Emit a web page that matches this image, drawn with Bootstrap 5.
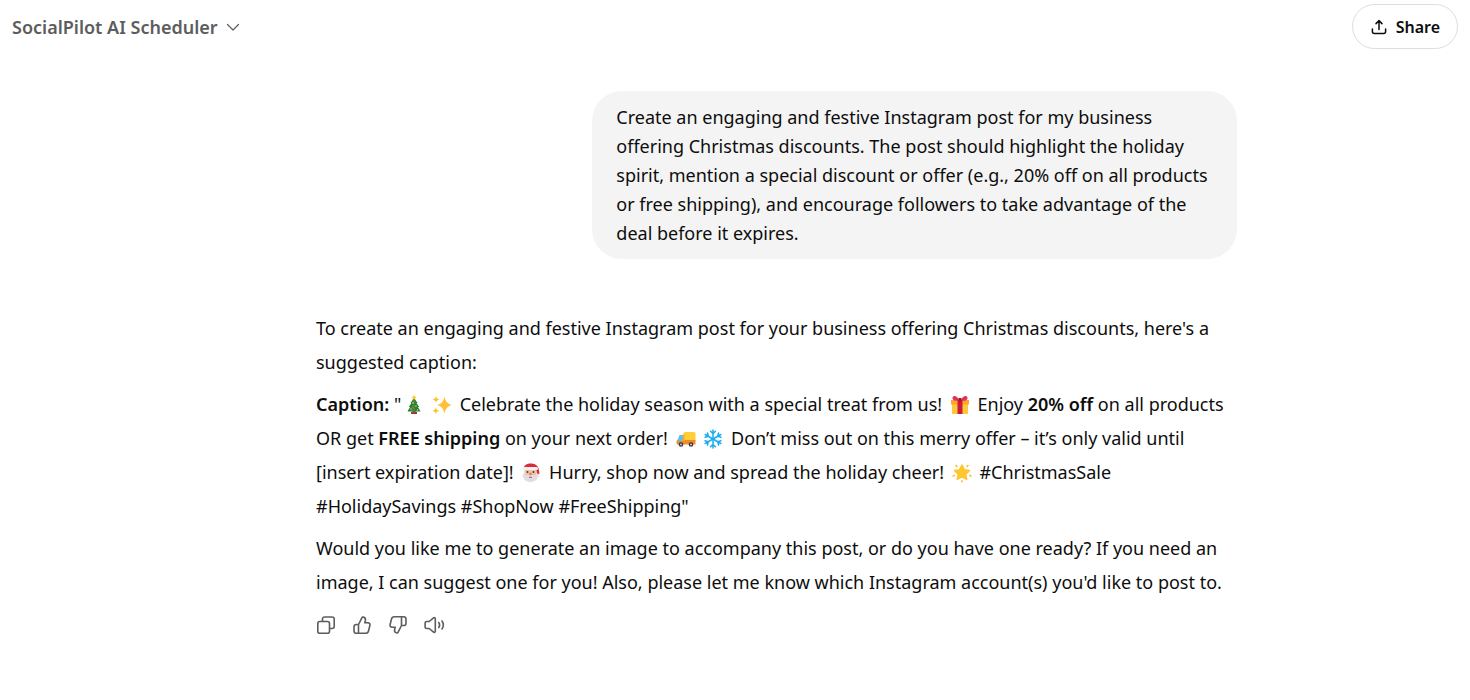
<!DOCTYPE html>
<html lang="en">
<head>
<meta charset="utf-8">
<meta name="viewport" content="width=device-width, initial-scale=1">
<title>SocialPilot AI Scheduler</title>
<link href="https://cdn.jsdelivr.net/npm/bootstrap@5.3.0/dist/css/bootstrap.min.css" rel="stylesheet">
<style>
  body { font-family: "Noto Sans", "Open Sans", sans-serif; font-size: 18px; color: #0d0d0d; background: #fff; }
  .topbar { padding: 4px 12px; }
  .model-btn { color: #5d5d5d; font-size: 18px; font-weight: 600; line-height: 28px; }
  .share-btn { height: 45px; padding: 0 17px; border: 1px solid #dedede; font-size: 16px; font-weight: 600; color: #0d0d0d; }
  .thread { max-width: 921px; }
  .thread-wrap { padding-left: 83px; }
  .bubble { max-width: 70%; margin-top: 38px; padding: 12px 24px 11px; border-radius: 30px; background: #f4f4f4; line-height: 29px; }
  .reply { margin-top: 52px; line-height: 34px; }
  .reply p { margin-bottom: 8px; }
  .reply strong { font-weight: 600; }
  .emo { width: 20px; height: 20px; margin: 0 3px; vertical-align: -4px; }
  .emo-next { margin-left: 0; }
  .tool { width: 20px; height: 20px; color: #5d5d5d; }
  .line-icon { fill: none; stroke: currentColor; stroke-linecap: round; stroke-linejoin: round; display: block; }
</style>
</head>
<body>
<header class="topbar d-flex align-items-center justify-content-between">
  <button type="button" class="model-btn btn p-0 border-0 d-flex align-items-center gap-2">SocialPilot AI Scheduler
    <svg class="line-icon" width="14" height="14" viewBox="0 0 14 14" stroke-width="1.2" aria-hidden="true"><path d="M1.500 4.500 7 10l5.500-5.500"/></svg>
  </button>
  <button type="button" class="share-btn btn rounded-pill d-flex align-items-center gap-2">
    <svg class="line-icon" width="18" height="18" viewBox="0 0 18 18" stroke-width="1.500" aria-hidden="true"><path d="M9 11.500V2.800M6 5.600 9 2.600l3 3M2.400 11v2.600c0 1.200.8 2 2 2h9.200c1.200 0 2-.8 2-2V11"/></svg>
    Share
  </button>
</header>

<main class="thread-wrap">
  <div class="thread mx-auto">
    <div class="d-flex justify-content-end">
      <div class="bubble">Create an engaging and festive Instagram post for my business offering Christmas discounts. The post should highlight the holiday spirit, mention a special discount or offer (e.g., 20% off on all products or free shipping), and encourage followers to take advantage of the deal before it expires.</div>
    </div>

    <article class="reply">
      <p>To create an engaging and festive Instagram post for your business offering Christmas discounts, here's a suggested caption:</p>
      <p><strong>Caption:</strong> "<svg class="emo" viewBox="0 0 20 20" role="img" aria-label="Christmas tree"><path fill="#8b5a3c" d="M8.500 15h3v4h-3z"/><path fill="#a33b34" d="M7 17h6v2H7z"/><path fill="#1d7f38" d="M10 3 6.500 8h1L4.800 12h1.300L3.500 16.500h13L13.900 12h1.300L12.500 8h1z"/><path fill="#38983f" d="m10 3-2 5 2 1-3 4 3 1-4 2h5z"/><path fill="#ffc830" d="m10 0 .8 1.600 1.800.3-1.300 1.200.3 1.800L10 4l-1.600.9.3-1.800-1.300-1.200 1.800-.3z"/><g fill="#ffd23c"><circle cx="9" cy="8" r=".8"/><circle cx="12" cy="11" r=".8"/><circle cx="7" cy="14" r=".8"/><circle cx="13.500" cy="15" r=".8"/></g><g fill="#e34b3b"><circle cx="11" cy="7" r=".7"/><circle cx="8.500" cy="11.500" r=".7"/><circle cx="10.500" cy="14" r=".7"/></g></svg>
      <svg class="emo emo-next" viewBox="0 0 20 20" role="img" aria-label="Sparkles"><g fill="#ffbf36"><path d="M12.500 1.500c1.200 5 2.500 7 7.500 8.500-5 1.500-6.300 3.500-7.500 8.500-1.200-5-2.500-7-7.500-8.500 5-1.500 6.300-3.500 7.500-8.500z"/><path d="M4 1c.5 2.200 1.300 2.900 3.500 3.400C5.300 4.900 4.500 5.600 4 7.800 3.500 5.600 2.700 4.900.5 4.400 2.700 3.900 3.500 3.200 4 1zM3.800 12.300c.5 2.200 1.300 2.900 3.500 3.400-2.200.5-3 1.200-3.500 3.400-.5-2.200-1.300-2.900-3.500-3.400 2.200-.5 3-1.200 3.500-3.400z"/></g></svg>
      Celebrate the holiday season with a special treat from us! <svg class="emo" viewBox="0 0 20 20" role="img" aria-label="Wrapped gift"><path fill="#ffc837" d="M2 8h16v11H2z"/><path fill="#f9a72f" d="M1 5h18v4.500H1z"/><path fill="#c91c3c" d="M7.500 5h5v14h-5z"/><path fill="#e9304a" d="M9 5C7 0 2 0 2.500 3.500 3 6 7 6 10 6s7 0 7.500-2.500C18 0 13 0 11 5z"/><path fill="#a5132f" d="M8.500 3h3v3.500h-3z"/></svg>
      Enjoy <strong>20% off</strong> on all products OR get <strong>FREE shipping</strong> on your next order! <svg class="emo" viewBox="0 0 20 20" role="img" aria-label="Delivery truck"><rect x="7.500" y="3" width="12" height="10" rx="1.500" fill="#ffcf3a"/><path fill="#f28b22" d="M1 11h18.500v4.500H1c-.7-1-.7-3 0-4.500z"/><path fill="#54c5f2" d="M3.500 6H7v6H1.200z"/><path fill="#f8a62a" d="M6.500 5.500h2V12h-2z"/><g fill="#3c3540"><circle cx="5" cy="15.500" r="2.300"/><circle cx="15" cy="15.500" r="2.300"/></g><g fill="#c9c6cc"><circle cx="5" cy="15.500" r="1"/><circle cx="15" cy="15.500" r="1"/></g></svg>
      <svg class="emo emo-next" viewBox="0 0 20 20" role="img" aria-label="Snowflake"><defs><path id="flake-arm" d="M10 10V1M7.600 2.200 10 4.600l2.400-2.400"/></defs><g fill="none" stroke="#1bacf0" stroke-width="1.500" stroke-linecap="round"><use href="#flake-arm"/><use href="#flake-arm" transform="rotate(60 10 10)"/><use href="#flake-arm" transform="rotate(120 10 10)"/><use href="#flake-arm" transform="rotate(180 10 10)"/><use href="#flake-arm" transform="rotate(240 10 10)"/><use href="#flake-arm" transform="rotate(300 10 10)"/></g></svg>
      Don’t miss out on this merry offer – it’s only valid until [insert expiration date]! <svg class="emo" viewBox="0 0 20 20" role="img" aria-label="Santa Claus"><path fill="#d92c38" d="M2.500 6C3 1 8 0 12 .8c4 .7 6 3 6.500 10.700h-2.300L15 7z"/><circle cx="17.600" cy="12.500" r="1.700" fill="#eee"/><path fill="#f3c2a5" d="M3.500 6h12v7h-12z"/><path fill="#dedee2" d="M2 10c1 1.500 2 2 3.500 2h8c1.500 0 2.500-.5 3.500-2 .8 5-2 9-7.500 9S1.200 15 2 10z"/><rect x="2" y="4" width="15" height="3" rx="1.500" fill="#f1f0f2"/><circle cx="6.500" cy="9" r=".9" fill="#493432"/><circle cx="12.500" cy="9" r=".9" fill="#493432"/><circle cx="9.500" cy="11" r="1.400" fill="#dc8b6c"/><path stroke="#b5525b" stroke-linecap="round" d="M8.500 14.300h2"/></svg>
      Hurry, shop now and spread the holiday cheer! <svg class="emo" viewBox="0 0 20 20" role="img" aria-label="Glowing star"><path fill="#ffc62e" stroke="#ffc62e" stroke-width="1.500" stroke-linejoin="round" d="m10 2 2.400 4.700 5.100.8-3.700 3.600.9 5.200-4.700-2.400-4.700 2.400.9-5.200-3.700-3.600 5.100-.8z"/><g stroke="#fbb936" stroke-width="1.600" stroke-linecap="round"><path d="m4 2.500.8.900M16 2.500l-.8.900M1.200 13l1-.4M18.800 13l-1-.4M10 17.800v1"/></g></svg>
      #ChristmasSale #HolidaySavings #ShopNow #FreeShipping"</p>
      <p>Would you like me to generate an image to accompany this post, or do you have one ready? If you need an image, I can suggest one for you! Also, please let me know which Instagram account(s) you'd like to post to.</p>
    </article>

    <div class="d-flex gap-3 pt-2">
      <button type="button" class="tool btn p-0 border-0" aria-label="Copy"><svg class="line-icon" width="20" height="20" viewBox="0 0 20 20" stroke-width="1.600"><rect x="1.800" y="6.500" width="11.700" height="11.700" rx="2"/><path d="M6.500 6.300V4c0-1.300.8-2 2-2H16c1.300 0 2.200.8 2.200 2v7.500c0 1.200-.9 2-2.200 2h-2.200"/></svg></button>
      <button type="button" class="tool btn p-0 border-0" aria-label="Good response"><svg class="line-icon" width="20" height="20" viewBox="0 0 20 20" stroke-width="1.600"><path id="thumb" d="M6.500 9.500 10 2.700c.2-.6.600-.8 1.200-.7 1.700.4 2.600 1.800 2.200 3.500l-.6 2.300h3c1.700 0 2.500 1.200 2.100 2.700l-1.400 5.500c-.4 1.500-1.200 2.200-2.700 2.200H4.300c-1.500 0-2.300-.8-2.300-2.300v-4.100c0-1.500.8-2.300 2.300-2.300zM6.500 9.500v8.700"/></svg></button>
      <button type="button" class="tool btn p-0 border-0" aria-label="Bad response"><svg class="line-icon" width="20" height="20" viewBox="0 0 20 20" stroke-width="1.600"><use href="#thumb" transform="rotate(180 10 10)"/></svg></button>
      <button type="button" class="tool btn p-0 border-0" aria-label="Read aloud"><svg class="line-icon" width="22" height="20" viewBox="0 0 22 20" stroke-width="1.600"><path d="M2.800 6.500h2.400l4.300-3.600c.8-.6 1.800-.2 1.800.9v12.400c0 1.100-1 1.500-1.800.9l-4.300-3.600H2.800c-1 0-1.700-.6-1.700-1.600V8c0-.9.700-1.500 1.700-1.500zM14.800 7.500c1 1.500 1 3.500 0 5M18 6c1.700 2.500 1.700 5.500 0 8"/></svg></button>
    </div>
  </div>
</main>
<script src="https://cdn.jsdelivr.net/npm/bootstrap@5.3.0/dist/js/bootstrap.bundle.min.js"></script>
</body>
</html>
